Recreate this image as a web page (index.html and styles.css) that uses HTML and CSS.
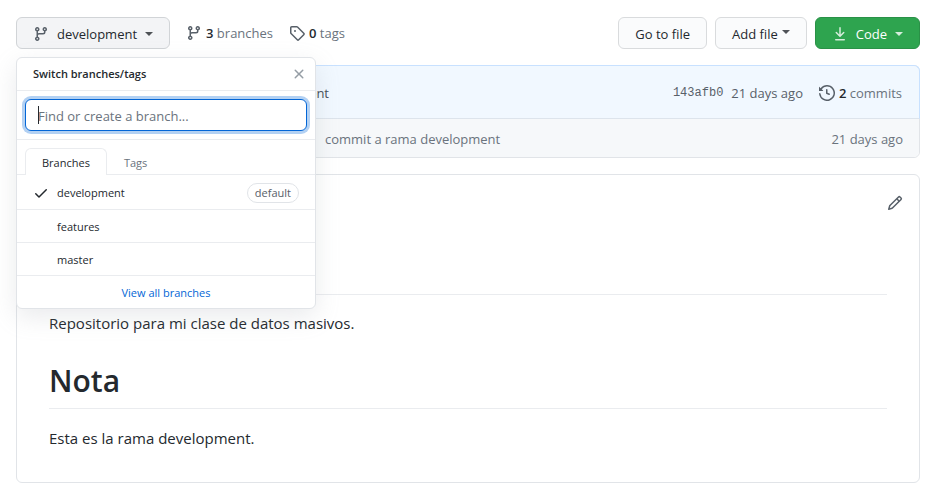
FILE: index.html
```html
<!DOCTYPE html>
<html lang="es">
<head>
<meta charset="utf-8">
<meta name="viewport" content="width=device-width, initial-scale=1">
<title>Repositorio</title>
<link rel="stylesheet" href="styles.css">
</head>
<body>
<svg class="sprite" aria-hidden="true">
  <symbol id="branch" viewBox="0 0 16 16"><path fill-rule="evenodd" d="M11.75 2.5a.75.75 0 100 1.5.75.75 0 000-1.5zm-2.25.75a2.25 2.25 0 113 2.122V6A2.5 2.5 0 0110 8.5H6a1 1 0 00-1 1v1.128a2.251 2.251 0 11-1.5 0V5.372a2.25 2.25 0 111.5 0v1.836A2.492 2.492 0 016 7h4a1 1 0 001-1v-.628A2.25 2.25 0 019.5 3.25zM4.25 12a.75.75 0 100 1.5.75.75 0 000-1.5zM3.5 3.25a.75.75 0 111.5 0 .75.75 0 01-1.5 0z"/></symbol>
</svg>
<main class="page">
  <header class="toolbar">
    <div class="switcher">
      <button class="btn btn-branch" type="button" aria-expanded="true">
        <svg class="icon"><use href="#branch"/></svg>
        <span>development</span>
        <span class="caret"></span>
      </button>
      <section class="menu" aria-label="Switch branches/tags">
        <div class="menu-head">
          <span class="menu-title">Switch branches/tags</span>
          <button class="close" type="button" aria-label="Close">
            <svg class="icon" viewBox="0 0 16 16"><path fill-rule="evenodd" d="M3.72 3.72a.75.75 0 011.06 0L8 6.94l3.22-3.22a.75.75 0 111.06 1.06L9.06 8l3.22 3.22a.75.75 0 11-1.06 1.06L8 9.06l-3.22 3.22a.75.75 0 01-1.06-1.06L6.94 8 3.72 4.78a.75.75 0 010-1.06z"/></svg>
          </button>
        </div>
        <div class="menu-search">
          <div class="field">
            <input type="text" aria-label="Find or create a branch" placeholder="Find or create a branch...">
            <span class="text-cursor"></span>
          </div>
        </div>
        <div class="tabs" role="tablist">
          <button class="tab selected" type="button" role="tab" aria-selected="true">Branches</button>
          <button class="tab" type="button" role="tab" aria-selected="false">Tags</button>
        </div>
        <a class="item" href="#development">
          <svg class="icon" viewBox="0 0 16 16"><path fill-rule="evenodd" d="M13.78 4.22a.75.75 0 010 1.06l-7.25 7.25a.75.75 0 01-1.06 0L2.22 9.28a.75.75 0 011.06-1.06L6 10.94l6.72-6.72a.75.75 0 011.06 0z"/></svg>
          <span class="name">development</span>
          <span class="label">default</span>
        </a>
        <a class="item" href="#features"><span class="icon"></span><span class="name">features</span></a>
        <a class="item" href="#master"><span class="icon"></span><span class="name">master</span></a>
        <a class="view-all" href="#branches">View all branches</a>
      </section>
    </div>
    <nav class="counts">
      <a class="count" href="#branches"><svg class="icon"><use href="#branch"/></svg><span><strong>3</strong> branches</span></a>
      <a class="count" href="#tags"><svg class="icon" viewBox="0 0 16 16"><path fill-rule="evenodd" d="M2.5 7.775V2.75a.25.25 0 01.25-.25h5.025a.25.25 0 01.177.073l6.25 6.25a.25.25 0 010 .354l-5.025 5.025a.25.25 0 01-.354 0l-6.25-6.25a.25.25 0 01-.073-.177zm-1.5 0V2.75C1 1.784 1.784 1 2.75 1h5.025c.464 0 .91.184 1.238.513l6.25 6.25a1.75 1.75 0 010 2.474l-5.026 5.026a1.75 1.75 0 01-2.474 0l-6.25-6.25A1.75 1.75 0 011 7.775zM6 5a1 1 0 100 2 1 1 0 000-2z"/></svg><span><strong>0</strong> tags</span></a>
    </nav>
    <div class="actions">
      <a class="btn" href="#find">Go to file</a>
      <button class="btn btn-add" type="button"><span>Add file</span><span class="caret"></span></button>
      <button class="btn btn-code" type="button">
        <svg class="icon" viewBox="0 0 16 16"><path fill-rule="evenodd" d="M7.47 10.78a.75.75 0 001.06 0l3.75-3.75a.75.75 0 00-1.06-1.06L8.75 8.44V1.75a.75.75 0 00-1.5 0v6.69L4.78 5.97a.75.75 0 00-1.06 1.06l3.75 3.75zM3.75 13a.75.75 0 000 1.5h8.5a.75.75 0 000-1.5h-8.5z"/></svg>
        <span>Code</span><span class="caret"></span>
      </button>
    </div>
  </header>

  <section class="files">
    <div class="commit">
      <a class="commit-title" href="#commit">development</a>
      <div class="commit-meta">
        <a class="sha" href="#commit">143afb0</a>
        <span>21 days ago</span>
        <a class="count history" href="#commits"><svg class="icon" viewBox="0 0 16 16"><path fill-rule="evenodd" d="M1.643 3.143L.427 1.927A.25.25 0 000 2.104V5.75c0 .138.112.25.25.25h3.646a.25.25 0 00.177-.427L2.715 4.215a6.5 6.5 0 11-1.18 4.458.75.75 0 10-1.493.154 8.001 8.001 0 101.6-5.684zM7.75 4a.75.75 0 01.75.75v2.992l2.028.812a.75.75 0 01-.557 1.392l-2.5-1A.75.75 0 017 8.25v-3.5A.75.75 0 017.75 4z"/></svg><span><strong>2</strong> commits</span></a>
      </div>
    </div>
    <div class="file">
      <a class="file-message" href="#message">commit a rama development</a>
      <span>21 days ago</span>
    </div>
  </section>

  <article class="readme">
    <div class="readme-head">
      <button class="edit" type="button" aria-label="Edit"><svg class="icon" viewBox="0 0 16 16"><path fill-rule="evenodd" d="M11.013 1.427a1.75 1.75 0 012.474 0l1.086 1.086a1.75 1.75 0 010 2.474l-8.61 8.61c-.21.21-.47.364-.756.445l-3.251.93a.75.75 0 01-.927-.928l.929-3.25a1.75 1.75 0 01.445-.758l8.61-8.61zm1.414 1.06a.25.25 0 00-.354 0L10.811 3.75l1.439 1.44 1.263-1.263a.25.25 0 000-.354l-1.086-1.086zM11.189 6.25L9.75 4.81l-6.286 6.287a.25.25 0 00-.064.108l-.558 1.953 1.953-.558a.249.249 0 00.108-.064l6.286-6.286z"/></svg></button>
    </div>
    <div class="readme-body">
      <div class="rule"></div>
      <p>Repositorio para mi clase de datos masivos.</p>
      <h1>Nota</h1>
      <p>Esta es la rama development.</p>
    </div>
  </article>
</main>
</body>
</html>
```
FILE: styles.css
```css
* { box-sizing: border-box; }

body {
  margin: 0;
  background: #fff;
  color: #24292e;
  font-family: "Open Sans", "Noto Sans", sans-serif;
  font-size: 13px;
  line-height: 20px;
}

a { color: inherit; text-decoration: none; }
button, input { font: inherit; color: inherit; }
button { cursor: pointer; }
strong { font-weight: 600; color: #24292e; }

.sprite { display: none; }
.icon { flex: none; width: 16px; height: 16px; fill: currentColor; }
.page { padding: 17px 20px 16px 16px; }

.toolbar { display: flex; align-items: flex-start; margin-bottom: 16px; }
.switcher { position: relative; }

.btn {
  display: flex;
  align-items: center;
  height: 32px;
  padding: 2px 16px 0;
  border: 1px solid #d9dbdd;
  border-radius: 6px;
  background: #fafbfc;
  white-space: nowrap;
}
.btn .icon { color: #586069; }
.caret {
  border: 4px solid transparent;
  border-top-color: currentColor;
  border-bottom-width: 0;
  opacity: 0.8;
}
.btn-branch { gap: 8px; background: #f3f4f6; border-color: #d1d4d7; }
.btn-add { gap: 4px; }
.btn-add .caret { margin-bottom: 4px; }
.btn-code { gap: 8px; background: #2ea44f; border-color: #2a9147; color: #fff; }
.btn-code .icon { color: #fff; opacity: 0.8; }

.counts { display: flex; gap: 16px; margin: 6px 0 0 16px; }
.count { display: flex; align-items: center; gap: 4px; color: #6a737d; }
.count .icon { color: #586069; }
.actions { display: flex; gap: 8px; margin-left: auto; }

.menu {
  position: absolute;
  z-index: 2;
  top: 40px;
  left: 0;
  width: 300px;
  border: 1px solid #e1e4e8;
  border-radius: 6px;
  background: #fff;
  box-shadow: 0 8px 24px rgba(149, 157, 165, 0.2);
  font-size: 11px;
  line-height: 16px;
}
.menu-head {
  display: flex;
  align-items: center;
  justify-content: space-between;
  height: 33px;
  padding: 0 8px 0 16px;
  border-bottom: 1px solid #eaecef;
}
.menu-title { font-weight: 600; }
.close { display: flex; padding: 0; border: 0; background: none; color: #959da5; }
.menu-search { padding: 8px; border-bottom: 1px solid #eaecef; }
.field { position: relative; }
.field input {
  display: block;
  width: 100%;
  height: 32px;
  padding: 2px 12px 0;
  border: 1px solid #0366d6;
  border-radius: 6px;
  outline: 0;
  background: #fff;
  box-shadow: 0 0 0 3px rgba(3, 102, 214, 0.3);
  font-size: 13px;
}
.field input::placeholder { color: #6a737d; opacity: 1; }
.text-cursor { position: absolute; top: 7px; left: 13px; width: 1px; height: 18px; background: #24292e; }

.tabs { display: flex; padding: 8px 8px 0; border-bottom: 1px solid #eaecef; }
.tab {
  height: 27px;
  margin-bottom: -1px;
  padding: 2px 16px 0;
  border: 1px solid transparent;
  border-bottom: 0;
  border-radius: 6px 6px 0 0;
  background: none;
  color: #6a737d;
}
.tab.selected { border-color: #eaecef; background: #fff; color: #24292e; }

.item {
  display: flex;
  align-items: center;
  gap: 8px;
  min-height: 33px;
  padding: 8px 16px 6px;
  border-bottom: 1px solid #eaecef;
}
.item .name { flex: 1; }
.label {
  padding: 1px 7px;
  border: 1px solid #e1e4e8;
  border-radius: 16px;
  color: #586069;
}
.view-all { display: block; padding: 9px 8px 7px; color: #0366d6; text-align: center; }

.files { margin-bottom: 16px; border: 1px solid #e1e4e8; border-radius: 6px; color: #6a737d; }
.commit {
  display: flex;
  align-items: center;
  justify-content: space-between;
  height: 54px;
  margin: -1px -1px 0;
  padding: 2px 17px 0 0;
  border: 1px solid #c8e1ff;
  border-bottom-color: #dde4ec;
  border-radius: 6px 6px 0 0;
  background: #f1f8ff;
}
.commit-title { width: 312px; color: #444d56; text-align: right; }
.commit-meta { display: flex; align-items: center; gap: 8px; color: #586069; }
.sha { font-family: "Liberation Mono", monospace; font-size: 12px; }
.history { margin-left: 8px; }
.file {
  display: flex;
  justify-content: space-between;
  padding: 10px 16px 8px 308px;
  border-radius: 0 0 6px 6px;
  background: #f6f8fa;
}

.readme { border: 1px solid #e1e4e8; border-radius: 6px; font-size: 15px; line-height: 24px; }
.readme-head { display: flex; justify-content: flex-end; padding: 20px 16px 0; }
.edit { display: flex; padding: 0; border: 0; background: none; color: #586069; }
.readme-body { padding: 0 32px 32px; }
.rule { height: 84px; margin-bottom: 16px; border-bottom: 1px solid #eaecef; }
.readme p { margin: 0; }
.readme h1 {
  margin: 25px 0 17px;
  padding-bottom: 7px;
  border-bottom: 1px solid #eaecef;
  font-size: 30px;
  font-weight: 600;
  line-height: 41px;
}
```
